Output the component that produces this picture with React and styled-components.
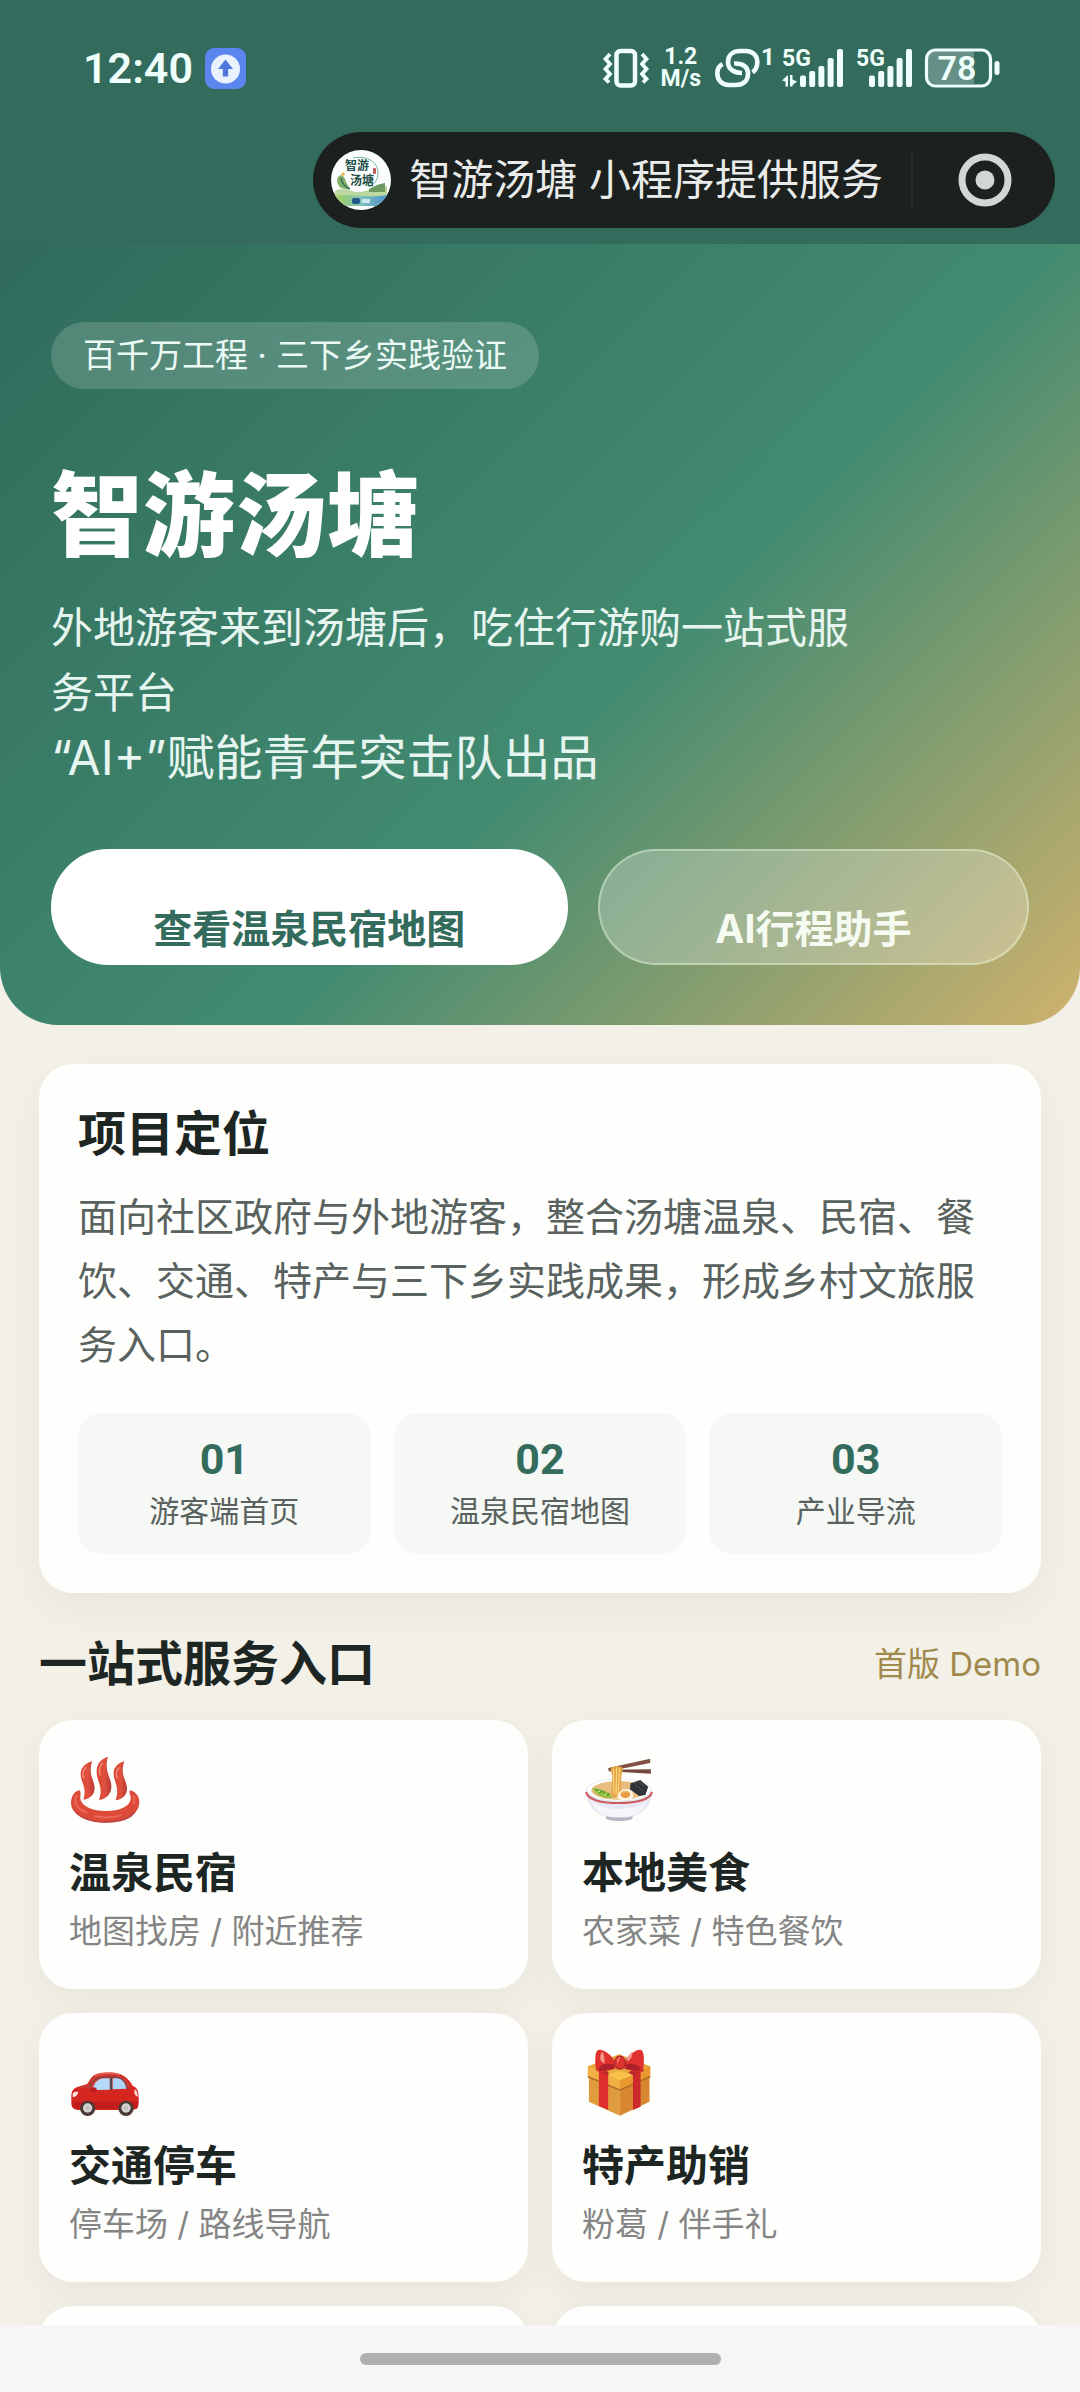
import styled, { createGlobalStyle } from 'styled-components';

const GlobalStyle = createGlobalStyle`
    :root {
        --green: #336b5c;
        --ink: #1d2623;
        --text: #59625e;
        --muted: #858585;
        --gold: #9f894b;
        --sand: #f3f0e7;
        --gutter: 39px;
        --digits: Roboto, sans-serif;
    }

    * {
        box-sizing: border-box;
    }

    body {
        margin: 0;
        background: var(--sand);
        font-family: Inter, "Noto Sans CJK SC", sans-serif;
        color: var(--ink);
    }
`

const Screen = styled.div`
    display: flex;
    flex-direction: column;
    height: 100vh;
    overflow: hidden;
`

/* top bar */

const TopBar = styled.header`
    flex: none;
    padding: 48px 25px 16px;
    background: var(--green);
`

const StatusRow = styled.div`
    display: flex;
    align-items: center;
    justify-content: space-between;
    height: 40px;
    padding: 0 55px 0 58px;
    color: #effffb;

    svg {
        overflow: visible;
    }

    svg text {
        font-family: var(--digits);
    }
`

const StatusGroup = styled.div`
    display: flex;
    align-items: center;
    gap: 12px;
`

const Clock = styled.time`
    font-family: var(--digits);
    font-size: 43px;
    line-height: 40px;
    font-weight: 600;
`

const Speed = styled.div`
    display: flex;
    flex-direction: column;
    align-items: center;
    font-family: var(--digits);
    font-size: 23px;
    line-height: 22px;
    font-weight: 700;
`

const Capsule = styled.div`
    display: flex;
    align-items: center;
    width: fit-content;
    height: 96px;
    margin: 44px 0 0 auto;
    padding: 0 43px 0 18px;
    border-radius: 48px;
    background: #1c201e;
    color: #e9ecea;
    font-size: 42px;
    line-height: 60px;
`

const CapsuleLabel = styled.span`
    margin-left: 18px;
`

const CapsuleDivider = styled.span`
    width: 2px;
    height: 56px;
    margin: 0 45px 0 28px;
    background: #252927;
`

const RingButton = styled.button`
    display: flex;
    padding: 0;
    border: 0;
    background: none;
`

/* hero */

const Scroller = styled.main`
    flex: 1;
    min-height: 0;
    overflow: hidden;
`

const Hero = styled.section`
    padding: 78px 51px 60px;
    border-radius: 0 0 58px 58px;
    background: linear-gradient(135deg, #306b5b 0%, #428b71 57%, #cfb26d 100%);
    color: #fff;
`

const Pill = styled.span`
    display: block;
    width: fit-content;
    padding: 0 32px;
    border-radius: 34px;
    background: rgba(255, 255, 255, 0.16);
    color: #ecfaf5;
    font-size: 33px;
    line-height: 67px;
`

const HeroTitle = styled.h1`
    margin: 72px 0 24px;
    font-size: 92px;
    line-height: 110px;
    font-weight: 900;
`

const HeroText = styled.p`
    max-width: 820px;
    margin: 0;
    color: #e6f5ef;
    font-size: ${({ $large }) => ($large ? '48px' : '42px')};
    line-height: 65px;
`

const HeroActions = styled.div`
    display: flex;
    gap: 30px;
    margin-top: 59px;
`

const ActionButton = styled.button`
    flex: ${({ $primary }) => ($primary ? '1.2' : '1')} 1 0;
    height: 116px;
    padding: 44px 0 0;
    border: 2px solid ${({ $primary }) => ($primary ? '#fff' : 'rgba(240, 255, 225, 0.4)')};
    border-radius: 58px;
    background: ${({ $primary }) => ($primary ? '#fff' : 'rgba(255, 255, 255, 0.25)')};
    color: ${({ $primary }) => ($primary ? 'var(--green)' : '#f6fbf2')};
    font-family: inherit;
    font-size: 39px;
    line-height: 60px;
    font-weight: 700;
`

/* content */

const Content = styled.div`
    padding: 39px var(--gutter) 0;
`

const Card = styled.section`
    padding: 39px;
    border-radius: 34px;
    background: #fefffd;
    box-shadow: 0 16px 40px rgba(50, 60, 60, 0.06);
`

const Heading = styled.h2`
    margin: 0;
    font-size: 48px;
    line-height: 62px;
    font-weight: 700;
`

const Paragraph = styled.p`
    margin: 20px 0 36px;
    color: var(--text);
    font-size: 39px;
    line-height: 64px;
`

const Stats = styled.div`
    display: grid;
    grid-template-columns: repeat(3, 1fr);
    gap: 23px;
`

const Stat = styled.div`
    padding: 22px 0 23px;
    border-radius: 24px;
    background: #f5f8f4;
    text-align: center;
`

const StatNumber = styled.strong`
    display: block;
    margin-bottom: 8px;
    color: var(--green);
    font-family: var(--digits);
    font-size: 43px;
    line-height: 48px;
    font-weight: 700;
`

const StatLabel = styled.span`
    display: block;
    color: var(--text);
    font-size: 30px;
    line-height: 40px;
`

const SectionHead = styled.div`
    display: flex;
    align-items: center;
    justify-content: space-between;
    margin: 40px 0 25px;
`

const SectionNote = styled.span`
    color: var(--gold);
    font-size: 33px;
    line-height: 48px;
`

const Services = styled.nav`
    display: grid;
    grid-template-columns: repeat(2, 1fr);
    gap: 24px;
`

const Service = styled.a`
    display: flex;
    flex-direction: column;
    min-height: 269px;
    padding: 33px 30px;
    border-radius: 34px;
    background: #fefffd;
    box-shadow: 0 12px 36px rgba(50, 60, 60, 0.06);
    color: inherit;
    text-decoration: none;
`

const ServiceName = styled.strong`
    margin-top: 20px;
    font-size: 42px;
    line-height: 56px;
    font-weight: 700;
`

const ServiceHint = styled.span`
    margin-top: 6px;
    color: var(--muted);
    font-size: 33px;
    line-height: 48px;
`

const HomeBar = styled.footer`
    display: flex;
    flex: none;
    align-items: center;
    justify-content: center;
    height: 67px;
    background: #f6f6f6;
`

const HomeHandle = styled.span`
    width: 361px;
    height: 12px;
    border-radius: 6px;
    background: #b0b0b0;
`

/* status icons */

const UploadBadge = () => (
    <svg width="41" height="41" viewBox="0 0 41 41">
        <rect width="41" height="41" rx="9" fill="#5b85ef" />
        <circle cx="20.5" cy="21" r="14.5" fill="#e9f3ff" />
        <path d="M20.5 11.5l7.500 9.500h-4.800v7.500h-5.400v-7.500h-4.800z" fill="#4f78dd" />
    </svg>
)

const VibrateIcon = () => (
    <svg width="46" height="40" viewBox="0 0 46 40" fill="none" stroke="currentColor">
        <rect x="13.5" y="3" width="18.5" height="34.5" rx="4" strokeWidth="4.5" />
        <path d="M7 6L2.500 11 7 16 2.500 21 7 26 2.500 31 6 34.500" strokeWidth="3.8" />
        <path d="M39 6l4.500 5-4.500 5 4.500 5-4.500 5 4.500 5-3.500 3.500" strokeWidth="3.8" />
    </svg>
)

// two interlocked rings with a small counter
const LinkIcon = () => (
    <svg width="57" height="40" viewBox="-2 0 57 40" fill="none" stroke="currentColor" strokeWidth="4.600">
        <path d="M27 25C19 25 13 21 13 14 13 7 18 3 25 3h6c7 0 11.300 5 11.300 11 0 4.500-1.300 8-4.800 10.300" />
        <path d="M19 15.500C28 15 33 19 33 25.500 33 33 28 37 21 37h-7.500C7 37 2.300 32 2.300 25.500 2.300 21.500 4 18 7.500 16" />
        <text x="46" y="17" fill="currentColor" stroke="none" fontSize="24" fontWeight="700">1</text>
    </svg>
)

const SignalIcon = ({ active }) => (
    <svg width={active ? 62 : 57} height="40" viewBox={active ? '0 0 62 40' : '5 0 57 40'} fill="currentColor">
        <text x={active ? 0 : 5} y="18" fontSize="23" fontWeight="700">5G</text>
        {active && <path d="M0 32.500L6 27v11.500H3.500V33.500zM8 27h2.500v4.500l4.500 2-4.500 3.500v1.500H8z" />}
        <rect x="18" y="27.5" width="6" height="11.5" rx="2" />
        <rect x="27.2" y="23" width="6" height="16" rx="2" />
        <rect x="36.4" y="18" width="6" height="21" rx="2" />
        <rect x="45.6" y="10" width="6" height="29" rx="2" />
        <rect x="55" y="1" width="6" height="38" rx="2" />
    </svg>
)

const BatteryIcon = () => (
    <svg width="75" height="40" viewBox="0 0 75 40" fill="none">
        <path d="M11 3h38v33H11a8 8 0 0 1-8-8V11a8 8 0 0 1 8-8z" fill="#fff" opacity="0.25" />
        <rect x="1.5" y="2" width="64" height="36" rx="9" stroke="currentColor" strokeWidth="3.200" />
        <rect x="69.5" y="13" width="5" height="14" rx="2.5" fill="currentColor" />
        <text x="32" y="32" fill="currentColor" fontSize="34" fontWeight="600" textAnchor="middle">78</text>
    </svg>
)

const RingIcon = () => (
    <svg width="54" height="54" viewBox="0 0 54 54">
        <circle cx="27" cy="27" r="23" fill="none" stroke="#d3d7d4" strokeWidth="7" />
        <circle cx="27" cy="27" r="9.5" fill="#d3d7d4" />
    </svg>
)

const AppLogo = () => (
    <svg width="60" height="60" viewBox="0 0 60 60">
        <defs>
            <clipPath id="logoClip"><circle cx="30" cy="30" r="30" /></clipPath>
            <linearGradient id="logoLake" x1="0" x2="1">
                <stop offset="0" stopColor="#a5cf5d" />
                <stop offset="0.5" stopColor="#7fc2b8" />
                <stop offset="1" stopColor="#4b93d2" />
            </linearGradient>
        </defs>
        <g clipPath="url(#logoClip)">
            <rect width="60" height="60" fill="#fbfefd" />
            <path d="M4 41c8-4 14-1 20 1 10 1 18-5 32-6v20H4z" fill="#bcd8a0" />
            <path d="M38 39c6-3 9-5 16-6v9H38z" fill="#6f9a62" />
            <path d="M4 46c14-3 32 3 52-1v11H4z" fill="url(#logoLake)" />
            <path d="M6 30c1-6 6-6 8-1 1 4 3 6 5 10-7 1-13-2-13-9z" fill="#83b16a" />
            <path d="M10 28c1 6 4 9 9 11" fill="none" stroke="#2f6d55" strokeWidth="1.500" />
            <path d="M22 8c14-3 26 4 25 17-1 6-5 10-9 12" fill="none" stroke="#6fae9f" strokeWidth="1" />
            <circle cx="12" cy="24" r="1.800" fill="#f0b54f" />
            <rect x="42" y="18" width="3" height="6" rx="1" fill="#c4575a" />
            <rect x="21" y="48" width="8" height="6" rx="2" fill="#24588a" />
            <rect x="31" y="49" width="8" height="4" rx="1" fill="#cfe7f3" />
            <text x="14" y="20" fontSize="12" fontWeight="700" fill="#234f4a">智游</text>
            <text x="19" y="35" fontSize="12" fontWeight="700" fill="#234f4a">汤塘</text>
        </g>
    </svg>
)

/* service icons */

const HotSpringIcon = () => (
    <svg width="72" height="72" viewBox="90 99 216 216">
        <defs>
            <linearGradient id="steam" x1="0" x2="1">
                <stop offset="0" stopColor="#d8402f" />
                <stop offset="0.5" stopColor="#e2513f" />
                <stop offset="1" stopColor="#b83a34" />
            </linearGradient>
        </defs>
        <path
            d="M122 211C106 213 96 230 96 248c0 35 45 60 104 60 58 0 101-27 101-61 0-19-13-34-29-36-3 8 4 14 3 26-2 22-33 36-74 36-40 0-73-14-77-36-1-10 4-17-2-26z"
            fill="#dd4a37"
        />
        <path d="M100 258c10 29 51 45 99 45 50 0 88-17 98-44-9 39-48 49-97 49-50 0-91-17-100-50z" fill="#bd4547" />
        <path d="M112 228c-11 20 7 41 31 50M168 289c28 5 58 3 77-3M283 228c4 7 5 14 2 21" fill="none" stroke="#ea6a58" strokeWidth="6" strokeLinecap="round" />
        <path d="M159 124c-21 5-34 22-34 39 0 25 20 35 8 76 20-2 34-15 34-34 0-24-20-37-8-81z" fill="url(#steam)" />
        <path d="M207 110c-23 6-35 25-34 46 1 31 21 43 7 85 23-5 38-20 37-43-1-29-23-45-10-88z" fill="url(#steam)" />
        <path d="M256 124c-21 5-33 21-32 37 1 27 19 39 6 80 22-4 35-17 34-37-2-27-22-38-8-80z" fill="url(#steam)" />
        <path d="M140 143c-9 11-10 21-6 31M189 130c-9 13-9 23-6 34M239 144c-9 10-8 20-5 29" fill="none" stroke="#f0897b" strokeWidth="5" strokeLinecap="round" />
    </svg>
)

const NoodleIcon = () => (
    <svg width="72" height="72" viewBox="122 99 209 216" preserveAspectRatio="none">
        <path d="M190 285h80l-2 12c-12 8-64 8-76 0z" fill="#b6b7c5" />
        <path d="M134 212c0 45 30 69 56 77 20 5 60 5 80 0 26-8 56-34 55-77z" fill="#e6e7f0" />
        <path d="M145 240c20 20 60 27 85 27s66-7 84-27c-12 25-28 41-48 48-18 4-52 4-72 0-22-7-38-22-49-48z" fill="#f5f5fb" />
        <ellipse cx="229.5" cy="212" rx="96" ry="36" fill="#dfe9ea" />
        <path d="M134 216c4 23 44 33 96 33 51 0 92-11 95-33" fill="none" stroke="#cf5a62" strokeWidth="6" />
        <ellipse cx="229.5" cy="210" rx="92" ry="32" fill="#fff" />
        <ellipse cx="229" cy="211" rx="80" ry="28" fill="#e9bd80" />
        <path d="M153 204c18 2 45 6 58 29-24 2-50-6-58-29z" fill="#8fbe3f" />
        <path d="M162 208l9 6M172 219l10-8M184 214l4 11M195 225l7-5" stroke="#58922e" strokeWidth="3.500" />
        <path d="M167 216l7-3M184 225l9-3" stroke="#cde487" strokeWidth="3.500" />
        <path d="M198 144l122-28v13l-120 25z" fill="#805144" />
        <path d="M200 149l122-1v13l-122-7z" fill="#74483d" />
        <path d="M205 150c-2-14 36-15 36-3l-5 22-1 53c-9 12-22 12-28 3l3-56z" fill="#e6a342" />
        <path d="M213 146l2 77M222 142l-1 83M231 145l-4 77" fill="none" stroke="#fae08e" strokeWidth="3" />
        <path d="M263 190l10-3 18-7 23 20-8 25-18 3-27-20z" fill="#303437" />
        <path d="M273 189l27 24M288 187l14 11" stroke="#4d5355" strokeWidth="3" />
        <path d="M224 233c3-18 15-27 28-26 15 1 21 12 18 26-8 8-36 11-46 0z" fill="#fff4e8" />
        <ellipse cx="248" cy="223" rx="14" ry="11" fill="#e69a42" />
        <path d="M239 221c4-8 14-8 17-2" stroke="#f9c35c" strokeWidth="3" fill="none" />
    </svg>
)

const CarIcon = () => (
    <svg width="72" height="72" viewBox="90 138 216 216">
        <path
            d="M97 284c1-12 8-20 18-23l30-9c11-20 20-31 41-33 20-2 45-2 58 4 18 8 29 20 37 35 12 4 17 13 17 25 2 14 2 27-1 39-4 7-15 8-28 8H117c-14-1-20-8-20-20z"
            fill="#d5261f"
        />
        <path d="M115 263l32-8c10-20 20-32 42-34 21-2 43-1 55 5 13 7 25 19 31 31l-9 11H158z" fill="#c93a31" />
        <path d="M161 263c8-16 15-27 34-28h17v34l-45 1z" fill="#b7daf9" />
        <path d="M221 235h16c13 2 22 14 26 31l-42 2z" fill="#aed5f8" />
        <path d="M216 233v37" stroke="#56494e" strokeWidth="6" />
        <path d="M151 262c10-20 20-30 42-30h44c14 3 24 16 28 36" fill="none" stroke="#854248" strokeWidth="4" />
        <path d="M155 264c9-5 18-2 18 4s-6 10-14 9c-6-1-8-9-4-13z" fill="#b91c22" />
        <path d="M101 281c4-6 10-7 17-5-1 9-7 14-17 16z" fill="#fbe8df" />
        <path d="M287 268c7 3 9 12 9 22-9-2-12-11-9-22z" fill="#fcd8ca" />
        <path d="M99 305h198l-4 21H111c-8-3-12-9-12-21z" fill="#c21d1d" />
        <circle cx="146" cy="325" r="23" fill="#4a3934" />
        <circle cx="261" cy="325" r="23" fill="#4a3934" />
        <circle cx="146" cy="324" r="14" fill="#d6d4d2" />
        <circle cx="261" cy="324" r="14" fill="#d6d4d2" />
        <circle cx="146" cy="324" r="7" fill="#c3c0be" />
        <circle cx="261" cy="324" r="7" fill="#c3c0be" />
        <path d="M170 227c17-9 52-9 72-3" fill="none" stroke="#ee6359" strokeWidth="4" strokeLinecap="round" />
    </svg>
)

const GiftIcon = () => (
    <svg width="72" height="72" viewBox="122 138 209 216" preserveAspectRatio="none">
        <path d="M139 199l91-36 90 36v33l-90 37-91-37z" fill="#e9a83f" />
        <path d="M142 230l90 37v80l-90-42z" fill="#e09b3d" />
        <path d="M232 267l86-37v75l-86 42z" fill="#d88731" />
        <path d="M139 199l93 39v31l-93-37z" fill="#f0b044" />
        <path d="M232 238l88-39v33l-88 37z" fill="#e7982e" />
        <path d="M197 226l33-15 40 15-38 15z" fill="#f9c14a" />
        <path d="M139 230l93 40 88-40" fill="none" stroke="#a96626" strokeWidth="4" />
        <path d="M171 211l27 10v109l-27-12z" fill="#df2f2c" />
        <path d="M270 223l22-9v106l-22 10z" fill="#ce2a2c" />
        <path d="M165 199l34 17-1 10-36-15zM296 199l-40 18 14 9 32-14z" fill="#bb262b" />
        <path d="M216 181c-12-20-32-33-44-32-13 2-12 27-11 48 1 13 9 21 19 19l39-10z" fill="#df322e" />
        <path d="M248 181c12-20 32-33 43-32 12 2 11 27 10 48-1 13-9 21-19 19l-37-10z" fill="#df322e" />
        <path d="M169 205c16-17 30-15 47-11l-2 12-40 8zM293 205c-15-16-29-15-44-11l-1 12 38 8z" fill="#ad2029" />
        <ellipse cx="232" cy="188" rx="16" ry="20" fill="#dd352f" stroke="#a72329" strokeWidth="3" />
        <path d="M181 157c-6 7-6 16-3 26l8 7c1-13 0-24-5-33zM267 157c-9 8-13 17-14 26 7-2 15-13 14-26zM233 171c-6 4-9 11-8 18" fill="#f69a91" stroke="#f69a91" strokeWidth="2" />
    </svg>
)

const stats = [
    { number: '01', label: '游客端首页' },
    { number: '02', label: '温泉民宿地图' },
    { number: '03', label: '产业导流' },
];

const services = [
    { name: '温泉民宿', hint: '地图找房 / 附近推荐', href: '#stay', Icon: HotSpringIcon },
    { name: '本地美食', hint: '农家菜 / 特色餐饮', href: '#food', Icon: NoodleIcon },
    { name: '交通停车', hint: '停车场 / 路线导航', href: '#traffic', Icon: CarIcon },
    { name: '特产助销', hint: '粉葛 / 伴手礼', href: '#goods', Icon: GiftIcon },
];

export default function App() {
    return (
        <Screen>
            <GlobalStyle />
            <TopBar>
                <StatusRow>
                    <StatusGroup>
                        <Clock>12:40</Clock>
                        <UploadBadge />
                    </StatusGroup>
                    <StatusGroup>
                        <VibrateIcon />
                        <Speed><span>1.2</span><span>M/s</span></Speed>
                        <LinkIcon />
                        <SignalIcon active />
                        <SignalIcon />
                        <BatteryIcon />
                    </StatusGroup>
                </StatusRow>
                <Capsule>
                    <AppLogo />
                    <CapsuleLabel>智游汤塘 小程序提供服务</CapsuleLabel>
                    <CapsuleDivider />
                    <RingButton type="button" aria-label="关闭"><RingIcon /></RingButton>
                </Capsule>
            </TopBar>

            <Scroller>
                <Hero>
                    <Pill>百千万工程 · 三下乡实践验证</Pill>
                    <HeroTitle>智游汤塘</HeroTitle>
                    <HeroText>外地游客来到汤塘后，吃住行游购一站式服务平台</HeroText>
                    <HeroText $large>“AI+”赋能青年突击队出品</HeroText>
                    <HeroActions>
                        <ActionButton type="button" $primary>查看温泉民宿地图</ActionButton>
                        <ActionButton type="button">AI行程助手</ActionButton>
                    </HeroActions>
                </Hero>

                <Content>
                    <Card>
                        <Heading>项目定位</Heading>
                        <Paragraph>
                            面向社区政府与外地游客，整合汤塘温泉、民宿、餐饮、交通、特产与三下乡实践成果，形成乡村文旅服务入口。
                        </Paragraph>
                        <Stats>
                            {
                                stats.map(({ number, label }) => (
                                    <Stat key={number}>
                                        <StatNumber>{number}</StatNumber>
                                        <StatLabel>{label}</StatLabel>
                                    </Stat>
                                ))
                            }
                        </Stats>
                    </Card>

                    <SectionHead>
                        <Heading>一站式服务入口</Heading>
                        <SectionNote>首版 Demo</SectionNote>
                    </SectionHead>

                    <Services>
                        {
                            services.map(({ name, hint, href, Icon }) => (
                                <Service key={name} href={href}>
                                    <Icon />
                                    <ServiceName>{name}</ServiceName>
                                    <ServiceHint>{hint}</ServiceHint>
                                </Service>
                            ))
                        }
                        <Service as="div" />
                        <Service as="div" />
                    </Services>
                </Content>
            </Scroller>

            <HomeBar>
                <HomeHandle />
            </HomeBar>
        </Screen>
    )
}
